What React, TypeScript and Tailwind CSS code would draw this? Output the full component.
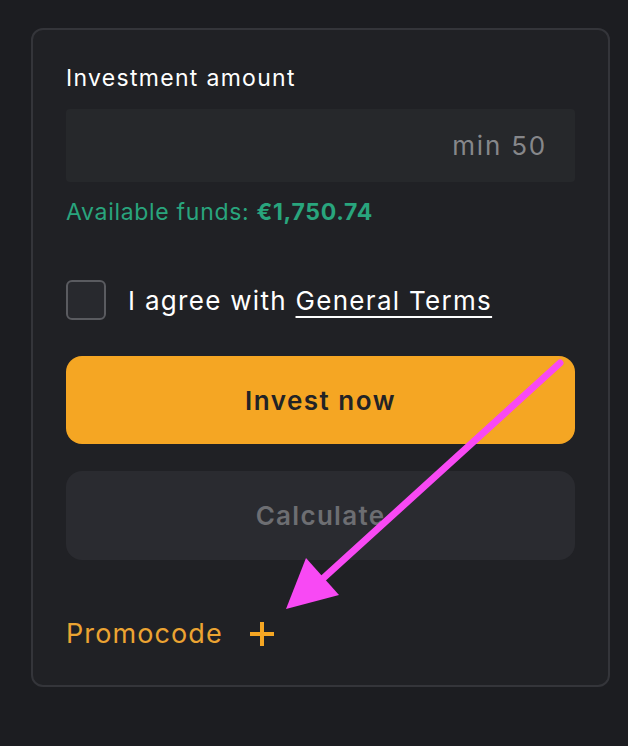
import { useState } from 'react'

function PromoArrow() {
  return (
    <svg
      className="pointer-events-none absolute left-0 top-0"
      width="628"
      height="746"
      viewBox="0 0 628 746"
    >
      <line x1="560" y1="363" x2="318" y2="583" stroke="#f849f4" strokeWidth="7" strokeLinecap="round" />
      <polygon points="286,609 306,558 339,595" fill="#f849f4" />
    </svg>
  )
}

export default function App() {
  const [agreed, setAgreed] = useState(false)

  return (
    <div
      className="relative min-h-[746px] w-full bg-[#1c1d21] pl-[31px] pr-[18px] pt-[28px]"
      style={{ fontFamily: 'Inter, "Noto Sans", sans-serif' }}
    >
      <div className="flex h-[659px] flex-col rounded-[12px] border-2 border-[#34353a] bg-[#202125] px-[33px] pt-[34px]">
        <label className="text-[23px] leading-[28px] tracking-[1.3px] text-white">
          Investment amount
        </label>

        <div className="mt-[17px] flex h-[73px] items-center justify-end rounded-[4px] bg-[#26282b] px-[28px]">
          <span className="text-[26px] tracking-[1.8px] text-[#86878a]">min 50</span>
        </div>

        <p className="mt-[16px] text-[23px] leading-[28px] tracking-[0.7px] text-[#29a57d]">
          Available funds: <span className="font-bold">€1,750.74</span>
        </p>

        <div className="mt-[54px] flex items-center gap-[22px]">
          <button
            onClick={() => setAgreed(!agreed)}
            className="h-[40px] w-[40px] rounded-[6px] border-2 border-[#5a5b60] bg-[#28292e]"
          />
          <span className="text-[26px] tracking-[1.3px] text-white">
            I agree with{' '}
            <span className="underline decoration-2 underline-offset-[6px]">General Terms</span>
          </span>
        </div>

        <button className="mt-[36px] flex h-[88px] items-center justify-center rounded-[16px] bg-[#f5a623] text-[26px] font-semibold tracking-[1.5px] text-[#222326]">
          Invest now
        </button>

        <button className="mt-[27px] flex h-[89px] items-center justify-center rounded-[16px] bg-[#2a2b30] text-[26px] font-semibold tracking-[1.3px] text-[#6d6e72]">
          Calculate
        </button>

        <div className="mt-[54px] flex items-center gap-[26px]">
          <span className="text-[27px] tracking-[1.1px] text-[#eca432]">Promocode</span>
          <svg width="26" height="26" viewBox="0 0 26 26">
            <path d="M13 1v24M1 13h24" stroke="#f5a623" strokeWidth="4" />
          </svg>
        </div>
      </div>

      <PromoArrow />
    </div>
  )
}
